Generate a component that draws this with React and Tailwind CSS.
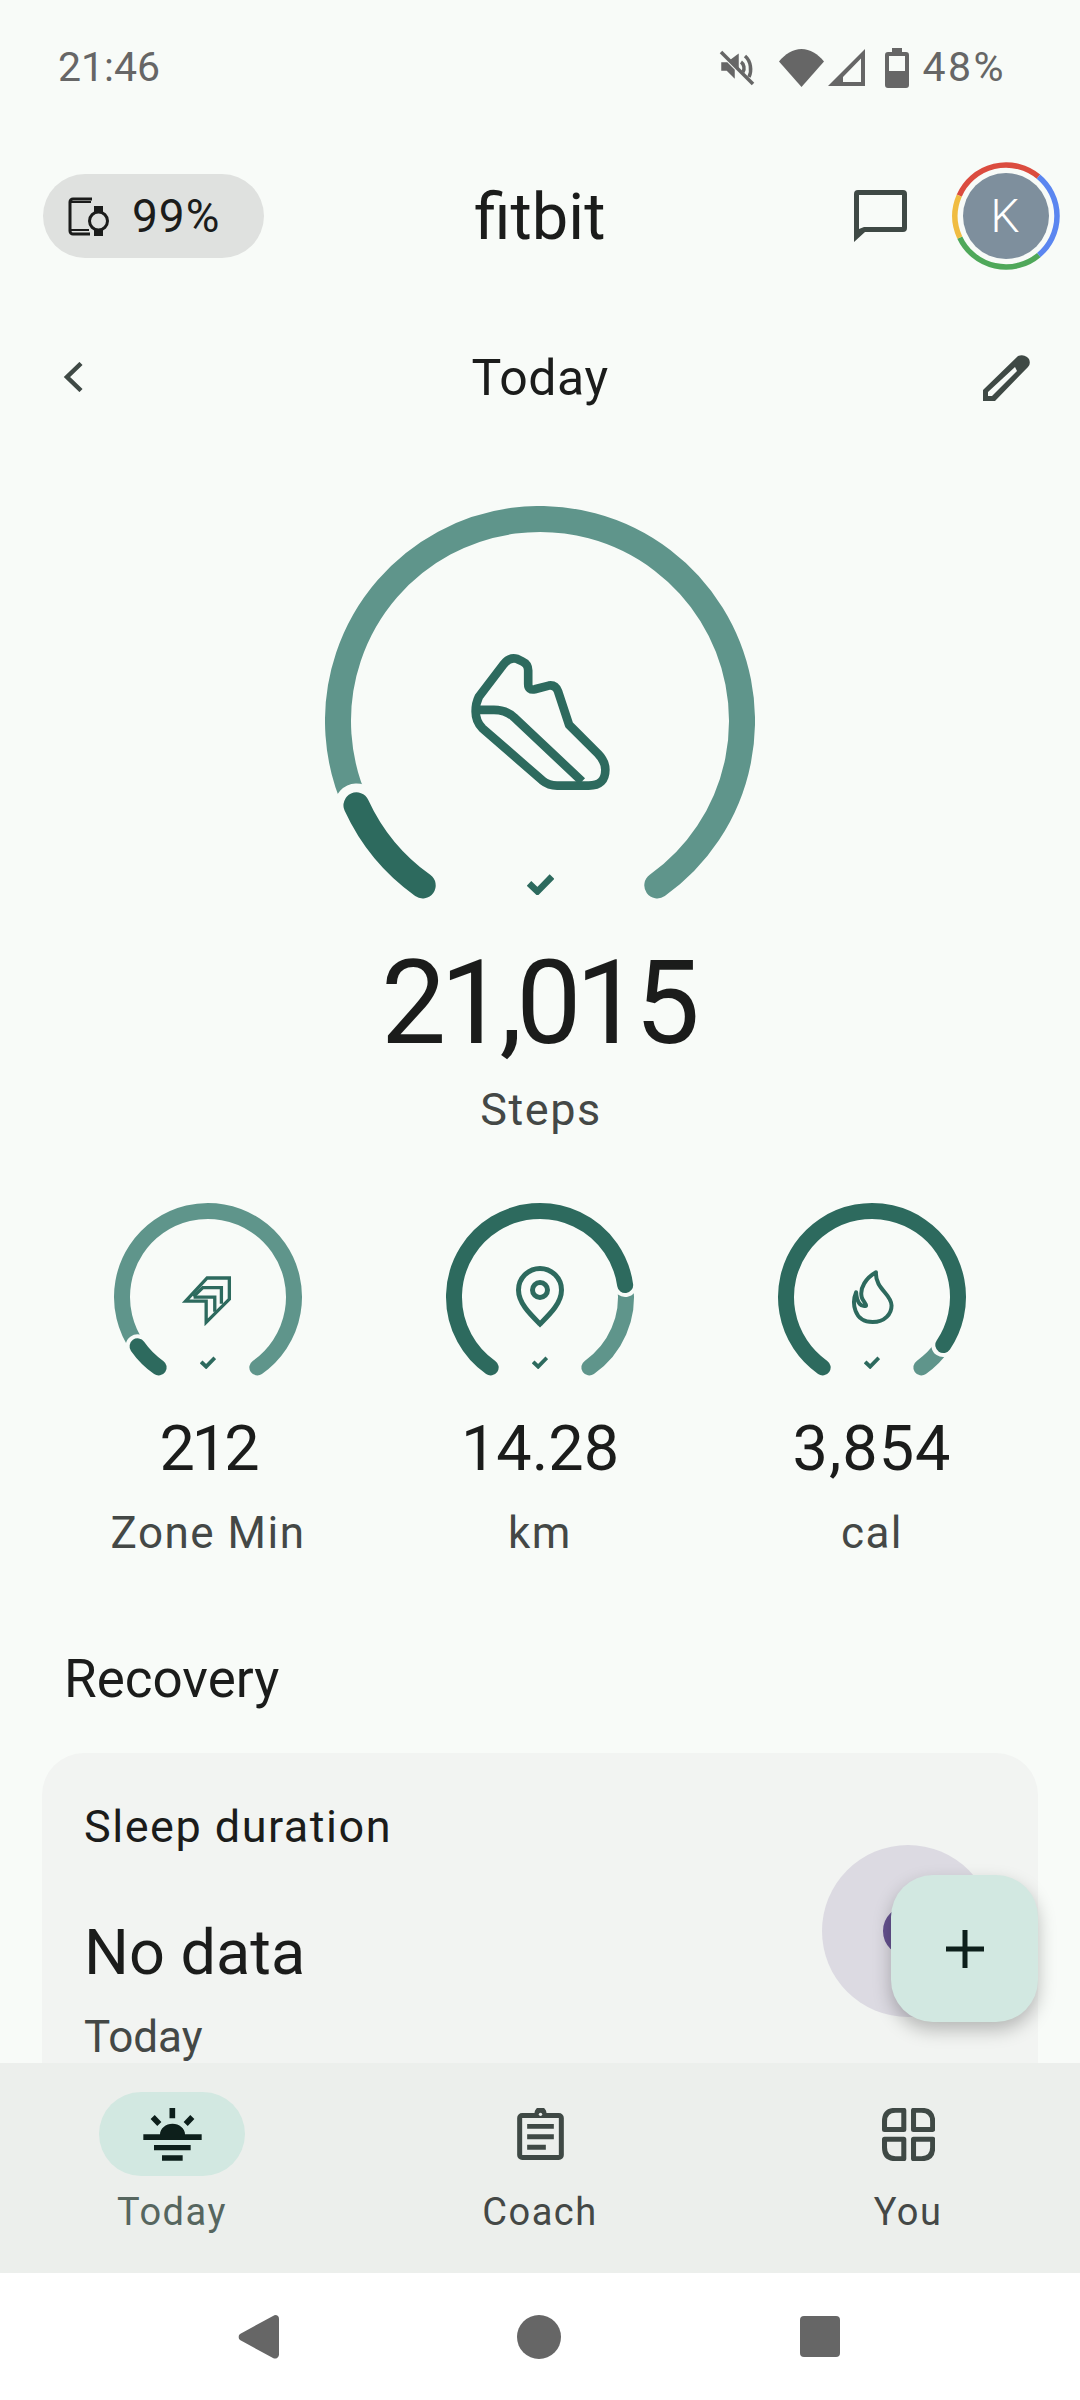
const LIGHT = '#5f958b';
const DARK = '#2d6a5e';
const BG = '#f8fbf8';
const ICON = '#3f4945';

// point on a circle, angle in degrees clockwise from 12 o'clock
const pt = (cx, cy, r, deg) => {
  const a = (deg * Math.PI) / 180;
  return [cx + r * Math.sin(a), cy - r * Math.cos(a)];
};

const arc = (cx, cy, r, from, to) => {
  const [x1, y1] = pt(cx, cy, r, from);
  const [x2, y2] = pt(cx, cy, r, to);
  const large = to - from > 180 ? 1 : 0;
  return `M${x1} ${y1}A${r} ${r} 0 ${large} 1 ${x2} ${y2}`;
};

// gauge ring: dark progress from the lower left end, light track for the rest
function Ring({ size, r, stroke, split, gap, start = 215, end = 505 }) {
  const c = size / 2;
  return (
    <svg width={size} height={size} viewBox={`0 0 ${size} ${size}`} className="block" fill="none" strokeLinecap="round">
      <path d={arc(c, c, r, split, end)} stroke={LIGHT} strokeWidth={stroke} />
      <path d={arc(c, c, r, start, split)} stroke={BG} strokeWidth={stroke + gap * 2} />
      <path d={arc(c, c, r, start, split)} stroke={DARK} strokeWidth={stroke} />
    </svg>
  );
}

function Tick({ w, h }) {
  return (
    <svg width={w} height={h} viewBox="0 0 83 65" fill="none" stroke={DARK} strokeWidth="20">
      <path d="M6 29l26 25L77 8" />
    </svg>
  );
}

function MuteIcon() {
  return (
    <svg width="36" height="36" viewBox="0 0 36 36" fill="none" stroke="#666">
      <path d="M2 2l32 32" strokeWidth="3.500" />
      <path d="M5 13h3l7 7v7l-7-7H3v-7z" fill="#666" strokeWidth="1.500" />
      <path d="M18 7l-4 3 4 4zM22 12c3 2 4 7 2 10M26 6c6 5 7 15 4 21" strokeWidth="3.500" />
    </svg>
  );
}

function WifiIcon() {
  return (
    <svg width="45" height="38" viewBox="0 0 45 38" fill="#666">
      <path d="M22.500 38 0 12.500C6 5 14 0 22.500 0S39 5 45 12.500z" />
    </svg>
  );
}

function SignalIcon() {
  return (
    <svg width="37" height="37" viewBox="0 0 37 37">
      <path fillRule="evenodd" fill="#666" d="M37 0v37H0zM33 9.500 15 28v5h18z" />
    </svg>
  );
}

function BatteryIcon() {
  return (
    <svg width="24" height="40" viewBox="0 0 24 40">
      <path d="M7 0h10v4h4a3 3 0 0 1 3 3v30a3 3 0 0 1-3 3H3a3 3 0 0 1-3-3V7a3 3 0 0 1 3-3h4z" fill="#666" />
      <rect x="4" y="8" width="16" height="15" fill={BG} />
    </svg>
  );
}

function WatchPhoneIcon() {
  return (
    <svg width="41" height="39" viewBox="0 0 41 39">
      <path d="M24 2H5a3 3 0 0 0-3 3v29a3 3 0 0 0 3 3h17" fill="none" stroke="#1b1c1b" strokeWidth="3" />
      <path d="M3 5h20M3 33h18" fill="none" stroke="#1b1c1b" strokeWidth="2" />
      <rect x="26" y="9" width="9" height="30" fill="#1b1c1b" />
      <circle cx="30.500" cy="24" r="9" fill="#dfe1df" stroke="#1b1c1b" strokeWidth="3" />
    </svg>
  );
}

function ShoeIcon() {
  return (
    <svg width="147" height="143" viewBox="500 510 440 430" fill="none" stroke={DARK} strokeWidth="26" strokeLinejoin="round">
      <path d="M535 650 610 552Q628 530 650 537L665 544Q683 552 683 572V612Q683 632 703 628L745 617Q765 614 773 635L806 735 893 822Q915 845 915 870 915 918 865 918H770Q745 918 725 902L545 745Q525 725 525 695 525 670 535 650Z" />
      <path d="M530 690H580Q615 690 640 712L845 905" />
    </svg>
  );
}

function ArrowsIcon() {
  return (
    <svg width="53" height="52" viewBox="265 285 160 157" fill="none" stroke={DARK} strokeWidth="10">
      <path d="M282 364 347 294H414V358L344 428V364Z" />
      <path d="M306 350 334 323H390V372" />
      <path d="M306 352H370V396" />
    </svg>
  );
}

function PinIcon() {
  return (
    <svg width="48" height="62" viewBox="0 0 48 62" fill="none" stroke={DARK} strokeWidth="5">
      <path d="M24 58C14 48 2.500 37 2.500 24a21.500 21.500 0 0 1 43 0c0 13-11.500 24-21.500 34z" />
      <circle cx="24" cy="24" r="7.500" />
    </svg>
  );
}

function FlameIcon() {
  return (
    <svg width="45" height="59" viewBox="930 262 135 178" fill="none" stroke={DARK} strokeWidth="12" strokeLinejoin="round">
      <path d="M1008 275C978 292 958 322 965 350 968 362 978 368 978 376 965 380 950 370 948 335 935 365 940 425 998 425 1035 425 1055 400 1055 375 1055 340 1005 325 1008 275Z" />
    </svg>
  );
}

function Stat({ value, label, split, icon, valueClass = '' }) {
  return (
    <div className="flex flex-col items-center w-[332px]">
      <div className="relative w-[196px] h-[196px]">
        <Ring size={196} r={86} stroke={16} split={split} gap={4} />
        {icon}
        <div className="absolute left-[90px] top-[157px] leading-[0]"><Tick w={16} h={13} /></div>
      </div>
      <div className={`text-[63px] leading-[72px] text-[#1b1c1b] mt-[18px] ${valueClass}`}>{value}</div>
      <div className="text-[44px] leading-[48px] tracking-[1.500px] text-[#444846] mt-[24px]">{label}</div>
    </div>
  );
}

function NavItem({ label, active, icon }) {
  return (
    <div className="flex flex-col items-center w-[146px]">
      <div className={`w-[146px] h-[84px] rounded-[42px] flex items-center justify-center ${active ? 'bg-[#d2e8e1]' : ''}`}>{icon}</div>
      <div className={`mt-[14px] text-[38px] leading-[44px] tracking-[1.500px] ${active ? 'text-[#56665f]' : 'text-[#444846]'}`}>{label}</div>
    </div>
  );
}

export default function App() {
  return (
    <div className="w-[1080px] h-[2400px] flex flex-col bg-[#f8fbf8] font-['Roboto',sans-serif] overflow-hidden relative">
      <main className="h-[2063px] overflow-hidden flex flex-col">
        {/* status bar */}
        <div className="h-[132px] shrink-0 flex items-center justify-between pl-[58px] pr-[74px] text-[#666] text-[41px] pt-[3px]">
          <span>21:46</span>
          <div className="flex items-center">
            <MuteIcon />
            <span className="w-[24px]" />
            <WifiIcon />
            <span className="w-[4px]" />
            <SignalIcon />
            <span className="w-[20px]" />
            <BatteryIcon />
            <span className="ml-[13px] tracking-[2.500px]">48%</span>
          </div>
        </div>

        {/* app bar */}
        <div className="h-[168px] shrink-0 relative flex items-center justify-between pl-[43px] pr-[20px]">
          <div className="w-[221px] h-[84px] rounded-[42px] bg-[#dfe1df] flex items-center pl-[25px] gap-[23px] text-[46px] tracking-[1px] text-[#1b1c1b]">
            <WatchPhoneIcon />
            <span>99%</span>
          </div>
          <span className="absolute left-1/2 -translate-x-1/2 text-[65px] text-[#1b1c1b] mt-[3px]">fitbit</span>
          <div className="flex items-center gap-[45px]">
            <svg width="53" height="52" viewBox="0 0 53 52">
              <path fillRule="evenodd" fill={ICON} d="M4 0H49A4 4 0 0 1 53 4V38A4 4 0 0 1 49 42H11L0 52V4A4 4 0 0 1 4 0ZM5 5V39L10 37H48V5Z" />
            </svg>
            <div className="w-[108px] h-[108px] relative flex items-center justify-center">
              <svg width="108" height="108" viewBox="0 0 108 108" className="absolute inset-0" fill="none" strokeWidth="5.500">
                <path d={arc(54, 54, 51, 293.600, 399.500)} stroke="#db4c3f" />
                <path d={arc(54, 54, 51, 39.500, 140)} stroke="#5b86f0" />
                <path d={arc(54, 54, 51, 140, 245)} stroke="#4fa85a" />
                <path d={arc(54, 54, 51, 245, 293.600)} stroke="#f0bc42" />
              </svg>
              <div className="w-[86px] h-[86px] rounded-full bg-[#7e8f9d] text-white text-[46px] font-light flex items-center justify-center pr-[2px]">K</div>
            </div>
          </div>
        </div>

        {/* date row */}
        <div className="h-[154px] shrink-0 relative flex items-center justify-between pl-[63px] pr-[50px]">
          <svg width="20" height="30" viewBox="0 0 20 30" fill="none" stroke={ICON} strokeWidth="4.500">
            <path d="M18 1.500 4 15l14 13.500" />
          </svg>
          <span className="absolute left-1/2 -translate-x-1/2 text-[50px] tracking-[0.500px] text-[#1b1c1b] mt-[2px]">Today</span>
          <svg width="47" height="47" viewBox="0 0 47 47">
            <path fillRule="evenodd" fill={ICON} d="M0 47V36L35 2Q40 0 44 3L46 5Q48 10 45 13L12 47ZM5 38 32 13 34 17 9 42H5Z" />
          </svg>
        </div>

        {/* steps gauge */}
        <div className="shrink-0 flex flex-col items-center mt-[52px]">
          <div className="relative w-[430px] h-[430px]">
            <Ring size={430} r={202} stroke={26} start={215.500} end={504.500} split={245.300} gap={9} />
            <div className="absolute inset-0 flex items-center justify-center"><ShoeIcon /></div>
            <div className="absolute left-[202px] top-[368px] leading-[0]"><Tick w={27} h={21} /></div>
          </div>
          <div className="text-[116px] leading-[130px] tracking-[-6px] text-[#1b1c1b] mt-[2px] pr-[5px]">21,015</div>
          <div className="text-[45px] leading-[50px] tracking-[1.500px] text-[#444846] mt-[17px] pl-[2px]">Steps</div>
        </div>

        {/* zone / distance / calories */}
        <div className="shrink-0 flex justify-center mt-[64px]">
          <Stat value="212" label="Zone Min" split={235} valueClass="tracking-[-3px]" icon={
            <div className="absolute left-[70px] top-[76px] leading-[0]"><ArrowsIcon /></div>
          } />
          <Stat value="14.28" label="km" split={442} icon={
            <div className="absolute inset-0 flex items-center justify-center"><PinIcon /></div>
          } />
          <Stat value="3,854" label="cal" split={484} valueClass="tracking-[1px]" icon={
            <div className="absolute inset-0 flex items-center justify-center"><FlameIcon /></div>
          } />
        </div>

        <div className="shrink-0 mt-[92px] pl-[64px] text-[53px] leading-[60px] text-[#1b1c1b]">Recovery</div>

        {/* sleep card */}
        <div className="shrink-0 mx-[42px] mt-[44px] h-[400px] rounded-[42px] bg-[#f2f4f2] pl-[42px] pr-[44px] relative flex justify-between">
          <div className="flex flex-col">
            <div className="text-[45px] leading-[50px] tracking-[1.500px] text-[#1b1c1b] mt-[49px]">Sleep duration</div>
            <div className="text-[63px] leading-[70px] text-[#1b1c1b] mt-[66px]">No data</div>
            <div className="text-[44px] leading-[52px] text-[#444846] mt-[23px]">Today</div>
          </div>
          <div className="w-[172px] h-[172px] rounded-full bg-[#dcdae2] flex items-center justify-center mt-[92px]">
            <div className="w-[50px] h-[50px] rounded-full border-[8px] border-[#65528f]" />
          </div>
        </div>
      </main>

      {/* add button floats over the card */}
      <div className="absolute left-[891px] top-[1875px] w-[147px] h-[147px] rounded-[42px] bg-[#d2e8e1] flex items-center justify-center shadow-[0_8px_18px_rgba(0,0,0,0.25)]">
        <svg width="38" height="38" viewBox="0 0 38 38" fill="#0d1f1b">
          <path d="M16.500 0h5v16.500H38v5H21.500V38h-5V21.500H0v-5h16.500z" />
        </svg>
      </div>

      {/* bottom tabs */}
      <nav className="h-[210px] shrink-0 bg-[#ecefec] flex gap-[222px] pl-[99px] pt-[29px]">
        <NavItem label="Today" active icon={
          <svg width="59" height="53" viewBox="190 76 175 159" fill="#0d1f1b" stroke="none">
            <path d="M190 155H365V172H190ZM222 187H332V203H222ZM246 218H308V234H246ZM240 155A37 31 0 0 1 315 155Z" />
            <path d="M277 76V107M218 103 238 124M337 103 317 124" stroke="#0d1f1b" strokeWidth="17" />
          </svg>
        } />
        <NavItem label="Coach" icon={
          <svg width="47" height="52" viewBox="108 77 140 156" fill={ICON}>
            <path fillRule="evenodd" d="M123 92H160A18 18 0 0 1 196 92H233A15 15 0 0 1 248 107V218A15 15 0 0 1 233 233H123A15 15 0 0 1 108 218V107A15 15 0 0 1 123 92ZM123 107V218H233V107Z" />
            <path d="M138 125H218V139H138ZM138 156H218V171H138ZM138 187H194V202H138Z" />
            <circle cx="178" cy="96" r="5" fill="#ecefec" />
          </svg>
        } />
        <NavItem label="You" icon={
          <svg width="53" height="53" viewBox="1200 84 158 158" fill="none" stroke={ICON} strokeWidth="15" strokeLinejoin="round">
            <path d="M1207.500 148H1265V91H1240Q1207.500 91 1207.500 124Z" />
            <path d="M1294 148H1351V124Q1351 91 1318 91H1294Z" />
            <path d="M1207.500 177H1265V235H1240Q1207.500 235 1207.500 202Z" />
            <path d="M1294 177H1351V202Q1351 235 1318 235H1294Z" />
          </svg>
        } />
      </nav>

      {/* android navigation */}
      <div className="h-[127px] shrink-0 bg-white flex items-center pl-[238px] gap-[238px]">
        <svg width="41" height="44" viewBox="0 0 41 44" fill="#666"><path d="M37 0a4 4 0 0 1 4 4v36a4 4 0 0 1-6 3L2 25a4 4 0 0 1 0-6L35 1z" /></svg>
        <div className="w-[44px] h-[44px] rounded-full bg-[#666]" />
        <div className="w-[40px] h-[41px] rounded-[4px] bg-[#666] ml-[1px]" />
      </div>
    </div>
  );
}
